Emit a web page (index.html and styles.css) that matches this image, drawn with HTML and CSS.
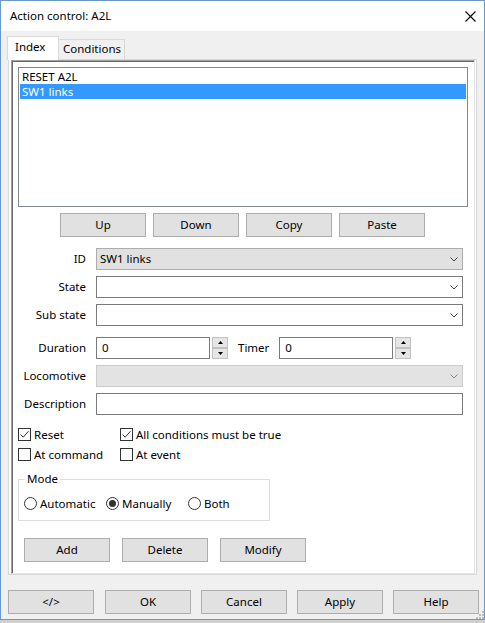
FILE: index.html
```html
<!DOCTYPE html>
<html>
<head>
<meta charset="utf-8">
<title>Action control: A2L</title>
<link rel="stylesheet" href="styles.css">
</head>
<body>
<div class="window">
  <div class="titlebar">
    <span class="title">Action control: A2L</span>
    <svg class="close" width="11" height="11" viewBox="0 0 11 11"><path d="M0.5 0.5 L10.5 10.5 M10.5 0.5 L0.5 10.5" stroke="#000" stroke-width="1.1" fill="none"/></svg>
  </div>
  <div class="client">
    <div class="tabs">
      <div class="tab active">Index</div>
      <div class="tab cond">Conditions</div>
    </div>
    <div class="panel">
      <div class="frame">
        <div class="listbox">
          <div class="item">RESET A2L</div>
          <div class="item sel">SW1 links</div>
        </div>
        <div class="btnrow toprow">
          <div class="btn">Up</div>
          <div class="btn">Down</div>
          <div class="btn">Copy</div>
          <div class="btn">Paste</div>
        </div>
        <div class="form">
          <div class="row">
            <div class="label">ID</div>
            <div class="combo ro"><span>SW1 links</span><svg class="chev" width="8" height="5" viewBox="0 0 8 5"><path d="M0.5 0.5 L4 4 L7.5 0.5" stroke="#444" fill="none"/></svg></div>
          </div>
          <div class="row">
            <div class="label">State</div>
            <div class="combo"><span></span><svg class="chev" width="8" height="5" viewBox="0 0 8 5"><path d="M0.5 0.5 L4 4 L7.5 0.5" stroke="#444" fill="none"/></svg></div>
          </div>
          <div class="row">
            <div class="label">Sub state</div>
            <div class="combo"><span></span><svg class="chev" width="8" height="5" viewBox="0 0 8 5"><path d="M0.5 0.5 L4 4 L7.5 0.5" stroke="#444" fill="none"/></svg></div>
          </div>
          <div class="row dur">
            <div class="label">Duration</div>
            <div class="num">0</div>
            <div class="spin">
              <span class="sb"><svg width="5" height="3" viewBox="0 0 5 3"><path d="M2.5 0 L5 3 L0 3 Z" fill="#000"/></svg></span>
              <span class="sb"><svg width="5" height="3" viewBox="0 0 5 3"><path d="M0 0 L5 0 L2.5 3 Z" fill="#000"/></svg></span>
            </div>
            <div class="label2">Timer</div>
            <div class="num">0</div>
            <div class="spin">
              <span class="sb"><svg width="5" height="3" viewBox="0 0 5 3"><path d="M2.5 0 L5 3 L0 3 Z" fill="#000"/></svg></span>
              <span class="sb"><svg width="5" height="3" viewBox="0 0 5 3"><path d="M0 0 L5 0 L2.5 3 Z" fill="#000"/></svg></span>
            </div>
          </div>
          <div class="row">
            <div class="label">Locomotive</div>
            <div class="combo dis"><span></span><svg class="chev" width="8" height="5" viewBox="0 0 8 5"><path d="M0.5 0.5 L4 4 L7.5 0.5" stroke="#888" fill="none"/></svg></div>
          </div>
          <div class="row">
            <div class="label">Description</div>
            <div class="text"></div>
          </div>
        </div>
        <div class="checks">
          <div class="check"><span class="box"><svg width="11" height="11" viewBox="0 0 11 11"><path d="M1.5 5.5 L4.2 8.2 L9.5 2.2" stroke="#333" stroke-width="1" fill="none"/></svg></span>Reset</div>
          <div class="check"><span class="box"><svg width="11" height="11" viewBox="0 0 11 11"><path d="M1.5 5.5 L4.2 8.2 L9.5 2.2" stroke="#333" stroke-width="1" fill="none"/></svg></span>All conditions must be true</div>
          <div class="check"><span class="box"></span>At command</div>
          <div class="check"><span class="box"></span>At event</div>
        </div>
        <fieldset class="mode">
          <legend>Mode</legend>
          <div class="radios">
            <div class="radio"><span class="circle"></span>Automatic</div>
            <div class="radio"><span class="circle on"><span class="dot"></span></span>Manually</div>
            <div class="radio"><span class="circle"></span>Both</div>
          </div>
        </fieldset>
        <div class="btnrow actions">
          <div class="btn">Add</div>
          <div class="btn">Delete</div>
          <div class="btn">Modify</div>
        </div>
      </div>
    </div>
    <div class="btnrow bottom">
      <div class="btn first">&lt;/&gt;</div>
      <div class="btn">OK</div>
      <div class="btn">Cancel</div>
      <div class="btn">Apply</div>
      <div class="btn">Help</div>
    </div>
    <svg class="grip" width="9" height="9" viewBox="0 0 9 9">
      <rect x="7" y="1" width="2" height="2" fill="#bcbcbc"/>
      <rect x="4" y="4" width="2" height="2" fill="#bcbcbc"/>
      <rect x="7" y="4" width="2" height="2" fill="#bcbcbc"/>
      <rect x="1" y="7" width="2" height="2" fill="#bcbcbc"/>
      <rect x="4" y="7" width="2" height="2" fill="#bcbcbc"/>
      <rect x="7" y="7" width="2" height="2" fill="#bcbcbc"/>
    </svg>
  </div>
</div>
</body>
</html>
```
FILE: styles.css
```css
* { box-sizing: border-box; }
html, body { margin: 0; padding: 0; }
body {
  width: 485px;
  height: 623px;
  overflow: hidden;
  background: #cfcfcf;
  font-family: "Noto Sans", "DejaVu Sans", sans-serif;
  font-size: 11.5px;
  color: #000;
}
.window {
  width: 485px;
  height: 620px;
  border: 1px solid #6a98cb;
  background: #f0f0f0;
  display: flex;
  flex-direction: column;
}
.titlebar {
  height: 30px;
  flex: none;
  background: #fff;
  display: flex;
  align-items: center;
  justify-content: space-between;
  padding-left: 9px;
  padding-right: 8px;
}
.title { line-height: 16px; }
.close { display: block; margin-top: 1px; }
.client {
  flex: 1;
  position: relative;
}
.tabs {
  height: 28px;
  display: flex;
  align-items: flex-end;
  padding-left: 6px;
}
.tab {
  border: 1px solid #d9d9d9;
  border-bottom: none;
  white-space: nowrap;
}
.tab.active {
  width: 52px;
  height: 24px;
  margin-bottom: -1px;
  background: #fff;
  position: relative;
  z-index: 1;
  padding-left: 7px;
  line-height: 20px;
}
.tab.cond {
  width: 66px;
  height: 20px;
  border-left: none;
  background: #f0f0f0;
  padding-left: 4px;
  line-height: 17px;
}
.panel {
  margin-left: 7px;
  width: 469px;
  height: 516px;
  border: 1px solid #d9d9d9;
  background: #fff;
  padding: 0 1px 0 2px;
}
.frame {
  height: 100%;
  border-top: 1px solid #a0a0a0;
  border-left: 1px solid #a0a0a0;
  border-right: 1px solid #e3e3e3;
  border-bottom: 1px solid #e3e3e3;
  box-shadow: inset 1px 1px 0 #696969;
  padding: 1px 0 0 1px;
}
.listbox {
  margin: 5px 0 0 5px;
  width: 450px;
  height: 140px;
  border: 1px solid #828790;
  padding: 1px;
}
.item {
  height: 15px;
  line-height: 15px;
  padding-left: 2px;
}
.item.sel {
  background: #3399ff;
  color: #fff;
}
.btnrow { display: flex; }
.btn {
  width: 86px;
  height: 24px;
  background: #e1e1e1;
  border: 1px solid #adadad;
  display: flex;
  align-items: center;
  justify-content: center;
  line-height: 16px;
}
.toprow {
  margin-top: 6px;
  padding-left: 47px;
  gap: 7px;
}
.form {
  margin-top: 11px;
  display: flex;
  flex-direction: column;
  gap: 6px;
}
.row {
  display: flex;
  align-items: center;
  height: 22px;
}
.row.dur { margin-top: 5px; }
.label {
  width: 73px;
  margin-right: 10px;
  text-align: right;
  white-space: nowrap;
  line-height: 22px;
}
.label2 {
  margin-left: 10px;
  margin-right: 10px;
  line-height: 22px;
}
.combo {
  width: 367px;
  height: 22px;
  border: 1px solid #7a7a7a;
  background: #fff;
  display: flex;
  align-items: center;
  justify-content: space-between;
  padding-left: 3px;
  padding-right: 4px;
  line-height: 20px;
}
.combo.ro {
  background: #e1e1e1;
  border-color: #adadad;
}
.combo.dis {
  background: #e3e3e3;
  border-color: #cccccc;
}
.chev { display: block; }
.num {
  width: 114px;
  height: 22px;
  border: 1px solid #7a7a7a;
  background: #fff;
  padding-left: 5px;
  line-height: 20px;
}
.spin {
  margin-left: 2px;
  width: 16px;
  height: 22px;
  display: flex;
  flex-direction: column;
}
.sb {
  height: 11px;
  background: #e6e6e6;
  border: 1px solid #c2c2c2;
  display: flex;
  align-items: center;
  justify-content: center;
}
.sb svg { display: block; }
.text {
  width: 367px;
  height: 22px;
  border: 1px solid #7a7a7a;
  background: #fff;
}
.checks {
  margin: 13px 0 0 5px;
  display: grid;
  grid-template-columns: 102px auto;
  row-gap: 7px;
}
.check {
  display: flex;
  align-items: center;
  height: 13px;
  line-height: 13px;
  white-space: nowrap;
}
.box {
  width: 13px;
  height: 13px;
  border: 1px solid #333;
  background: #fff;
  margin-right: 3px;
  flex: none;
}
.box svg { display: block; }
.mode {
  margin: 11px 0 0 5px;
  width: 252px;
  border: 1px solid #dcdcdc;
  padding: 0 0 10px 0;
  min-width: 0;
}
.mode legend {
  margin-left: 6px;
  padding: 0 2px;
  line-height: 14px;
}
.radios {
  margin-top: 11px;
  padding-left: 5px;
  display: grid;
  grid-template-columns: 82px 82px 82px;
}
.radio {
  display: flex;
  align-items: center;
  height: 13px;
  line-height: 13px;
  white-space: nowrap;
}
.circle {
  width: 13px;
  height: 13px;
  border: 1px solid #333;
  border-radius: 50%;
  background: #fff;
  margin-right: 3px;
  flex: none;
  display: flex;
  align-items: center;
  justify-content: center;
}
.dot {
  width: 7px;
  height: 7px;
  border-radius: 50%;
  background: #333;
}
.actions {
  margin-top: 17px;
  padding-left: 11px;
  gap: 12px;
}
.bottom {
  margin-top: 15px;
  padding-left: 7px;
  gap: 10px;
}
.bottom .first { margin-right: 1px; }
.grip {
  position: absolute;
  right: 0;
  bottom: 0;
  display: block;
}
```
